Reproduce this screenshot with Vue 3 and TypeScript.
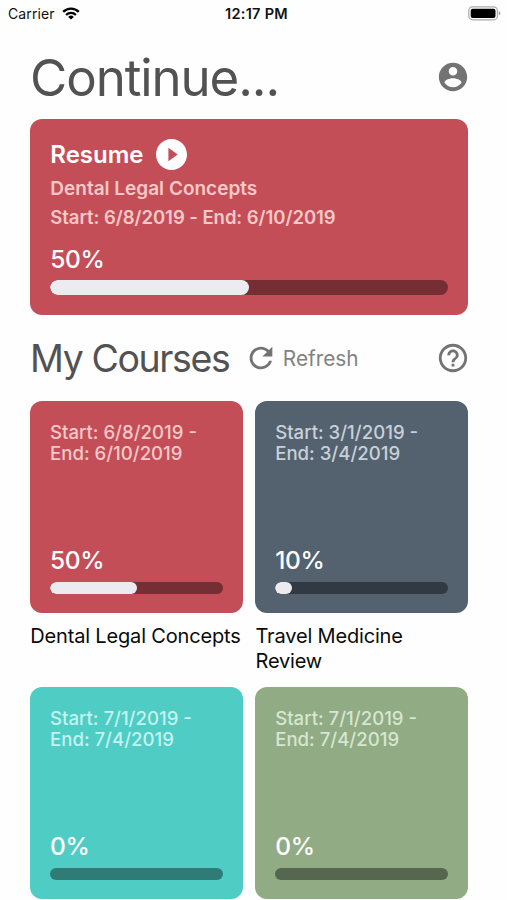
<script setup lang="ts">
interface Course {
  title: string
  start: string
  end: string
  progress: number
  color: string
  track: string
  muted: string
}

const current = { title: 'Dental Legal Concepts', start: '6/8/2019', end: '6/10/2019', progress: 50 }

const courses: Course[] = [
  { title: 'Dental Legal Concepts', start: '6/8/2019', end: '6/10/2019', progress: 50, color: '#c44e58', track: '#752e34', muted: '#f6c8c7' },
  { title: 'Travel Medicine Review', start: '3/1/2019', end: '3/4/2019', progress: 10, color: '#54626f', track: '#313a43', muted: '#c8d0d9' },
  { title: '', start: '7/1/2019', end: '7/4/2019', progress: 0, color: '#4fcdc4', track: '#2f7c76', muted: '#c3f3ef' },
  { title: '', start: '7/1/2019', end: '7/4/2019', progress: 0, color: '#91ab85', track: '#56674f', muted: '#d6e6d0' },
]
</script>

<template>
  <div class="screen">
    <div class="status">
      <div class="carrier">
        <span>Carrier</span>
        <svg class="wifi" viewBox="0 0 18 13">
          <g fill="none" stroke="#000" stroke-width="2.3">
            <path d="M1.2 4.9a11 11 0 0 1 15.6 0" />
            <path d="M4.1 8a6.9 6.9 0 0 1 9.8 0" />
          </g>
          <path d="M9 12.6 6.2 9.9a4 4 0 0 1 5.6 0z" />
        </svg>
      </div>
      <span class="time">12:17 PM</span>
      <div class="power">
        <svg class="battery" viewBox="0 0 33 15">
          <rect x="0.8" y="0.8" width="28.6" height="13" rx="3.8" fill="#fff" stroke="#aaa" stroke-width="1.2" />
          <rect x="2.7" y="2.7" width="24.8" height="9.2" rx="2" />
          <path d="M30.8 5.2q1.5.6 1.5 2.1t-1.5 2.1z" fill="#999" />
        </svg>
      </div>
    </div>

    <header class="heading">
      <h1>Continue...</h1>
      <svg class="icon" viewBox="0 0 24 24">
        <path d="M12 2C6.48 2 2 6.48 2 12s4.48 10 10 10 10-4.48 10-10S17.52 2 12 2zm0 3c1.66 0 3 1.34 3 3s-1.34 3-3 3-3-1.34-3-3 1.34-3 3-3zm0 14.2c-2.5 0-4.71-1.28-6-3.22.03-1.99 4-3.08 6-3.08 1.99 0 5.97 1.09 6 3.08-1.29 1.94-3.5 3.22-6 3.22z" />
      </svg>
    </header>

    <section class="resume">
      <div class="resume-row">
        <span class="resume-label">Resume</span>
        <svg class="play" viewBox="0 0 20 20">
          <path d="M10 0C4.48 0 0 4.48 0 10s4.48 10 10 10 10-4.48 10-10S15.52 0 10 0zM8 14.3V5.7l6 4.3z" />
        </svg>
      </div>
      <div class="resume-title">{{ current.title }}</div>
      <div class="resume-dates">Start: {{ current.start }} - End: {{ current.end }}</div>
      <div class="percent">{{ current.progress }}%</div>
      <div class="bar large"><div class="fill" :style="{ width: current.progress + '%' }"></div></div>
    </section>

    <div class="subheading">
      <h2>My Courses</h2>
      <svg class="refresh-icon" viewBox="0 0 24 24">
        <path d="M17.65 6.35C16.2 4.9 14.21 4 12 4c-4.42 0-7.99 3.58-7.99 8s3.57 8 7.99 8c3.73 0 6.84-2.55 7.73-6h-2.08c-.82 2.33-3.04 4-5.65 4-3.31 0-6-2.69-6-6s2.69-6 6-6c1.66 0 3.14.69 4.22 1.78L13 11h7V4l-2.35 2.35z" />
      </svg>
      <span class="refresh">Refresh</span>
      <svg class="icon" viewBox="0 0 24 24">
        <path d="M11 18h2v-2h-2v2zm1-16C6.48 2 2 6.48 2 12s4.48 10 10 10 10-4.48 10-10S17.52 2 12 2zm0 18c-4.41 0-8-3.59-8-8s3.59-8 8-8 8 3.59 8 8-3.59 8-8 8zm0-14c-2.21 0-4 1.79-4 4h2c0-1.1.9-2 2-2s2 .9 2 2c0 2-3 1.75-3 5h2c0-2.25 3-2.5 3-5 0-2.21-1.79-4-4-4z" />
      </svg>
    </div>

    <main class="grid">
      <article v-for="(course, i) in courses" :key="i">
        <div class="tile" :style="{ background: course.color }">
          <div class="dates" :style="{ color: course.muted }">
            <div>Start: {{ course.start }} -</div>
            <div>End: {{ course.end }}</div>
          </div>
          <div class="percent">{{ course.progress }}%</div>
          <div class="bar" :style="{ background: course.track }">
            <div class="fill" :style="{ width: course.progress + '%' }"></div>
          </div>
        </div>
        <div v-if="course.title" class="title">{{ course.title }}</div>
      </article>
    </main>
  </div>
</template>

<style>
body {
  background: #fff;
  overflow: hidden;
}
</style>

<style scoped>
.screen {
  box-sizing: border-box;
  width: 507px;
  height: 900px;
  overflow: hidden;
  background: #fefefe;
  color: #111;
  font-family: Inter, 'Liberation Sans', sans-serif;
}
.status {
  display: grid;
  grid-template-columns: 1fr auto 1fr;
  align-items: center;
  height: 27px;
  padding: 0 6px 0 8px;
  font-size: 14px;
  line-height: 27px;
}
.carrier {
  display: flex;
  align-items: center;
  gap: 7px;
  letter-spacing: 0.1px;
}
.wifi {
  width: 18px;
  height: 13px;
  margin-top: -1px;
}
.time {
  margin-left: 4px;
  font-size: 14.5px;
  font-weight: 600;
  letter-spacing: 0.3px;
}
.power {
  display: flex;
  justify-content: flex-end;
}
.battery {
  width: 33px;
  height: 15px;
}
.heading {
  display: flex;
  align-items: center;
  justify-content: space-between;
  height: 60px;
  padding: 20px 37px 0 30px;
}
h1,
h2 {
  margin: 0;
  color: #525252;
  font-weight: 400;
  white-space: nowrap;
}
h1 {
  padding-top: 2px;
  font-size: 51px;
  line-height: 60px;
  letter-spacing: -1.1px;
}
.icon {
  width: 34px;
  height: 34px;
  fill: #737373;
}
.resume {
  box-sizing: border-box;
  width: 438px;
  height: 196px;
  margin: 12.3px 0 0 30.3px;
  padding: 18px 20px 0;
  border-radius: 12px;
  background: #c44e58;
}
.resume-row {
  display: flex;
  align-items: center;
  gap: 12px;
  height: 34px;
}
.resume-label {
  padding-top: 2px;
  color: #fff;
  font-size: 24px;
  font-weight: 600;
  line-height: 34px;
}
.play {
  width: 31px;
  height: 31px;
  fill: #fff;
}
.resume-title,
.resume-dates {
  color: #f6c8c7;
  font-size: 18.5px;
  font-weight: 600;
  line-height: 29px;
  white-space: nowrap;
}
.resume-title {
  margin-top: 3px;
  font-size: 19px;
}
.resume-dates {
  letter-spacing: -0.05px;
}
.percent {
  color: #fff;
  font-size: 24.5px;
  font-weight: 550;
  line-height: 30px;
  letter-spacing: -0.35px;
}
.resume .percent {
  margin-top: 12px;
}
.bar {
  height: 12.5px;
  border-radius: 8px;
  overflow: hidden;
  background: #752e34;
}
.bar.large {
  height: 14.5px;
  margin-top: 5.8px;
}
.fill {
  height: 100%;
  border-radius: 8px;
  background: #ececf0;
}
.subheading {
  display: flex;
  align-items: center;
  height: 50px;
  margin-top: 18px;
  padding: 0 37px 0 30px;
}
h2 {
  padding-top: 2px;
  font-size: 37.5px;
  line-height: 50px;
  letter-spacing: -1.4px;
}
.refresh-icon {
  width: 34px;
  height: 34px;
  margin-left: 14.5px;
  fill: #737373;
}
.refresh {
  flex: 1;
  margin-left: 5px;
  padding-top: 2px;
  color: #828282;
  font-size: 20.8px;
  line-height: 50px;
}
.grid {
  display: grid;
  grid-template-columns: 212.5px 212.5px;
  grid-auto-rows: 286px;
  column-gap: 12.7px;
  margin: 17.5px 0 0 30.3px;
}
.tile {
  box-sizing: border-box;
  display: flex;
  flex-direction: column;
  height: 212.5px;
  padding: 21px 19.7px 19.3px;
  border-radius: 12px;
}
.dates {
  flex: 1;
  font-size: 18.6px;
  font-weight: 550;
  line-height: 21.6px;
  white-space: nowrap;
}
.tile .bar {
  margin-top: 6.7px;
}
.title {
  margin-top: 11px;
  font-size: 20px;
  line-height: 24.5px;
  letter-spacing: -0.17px;
  color: #0a0a0a;
}
</style>
